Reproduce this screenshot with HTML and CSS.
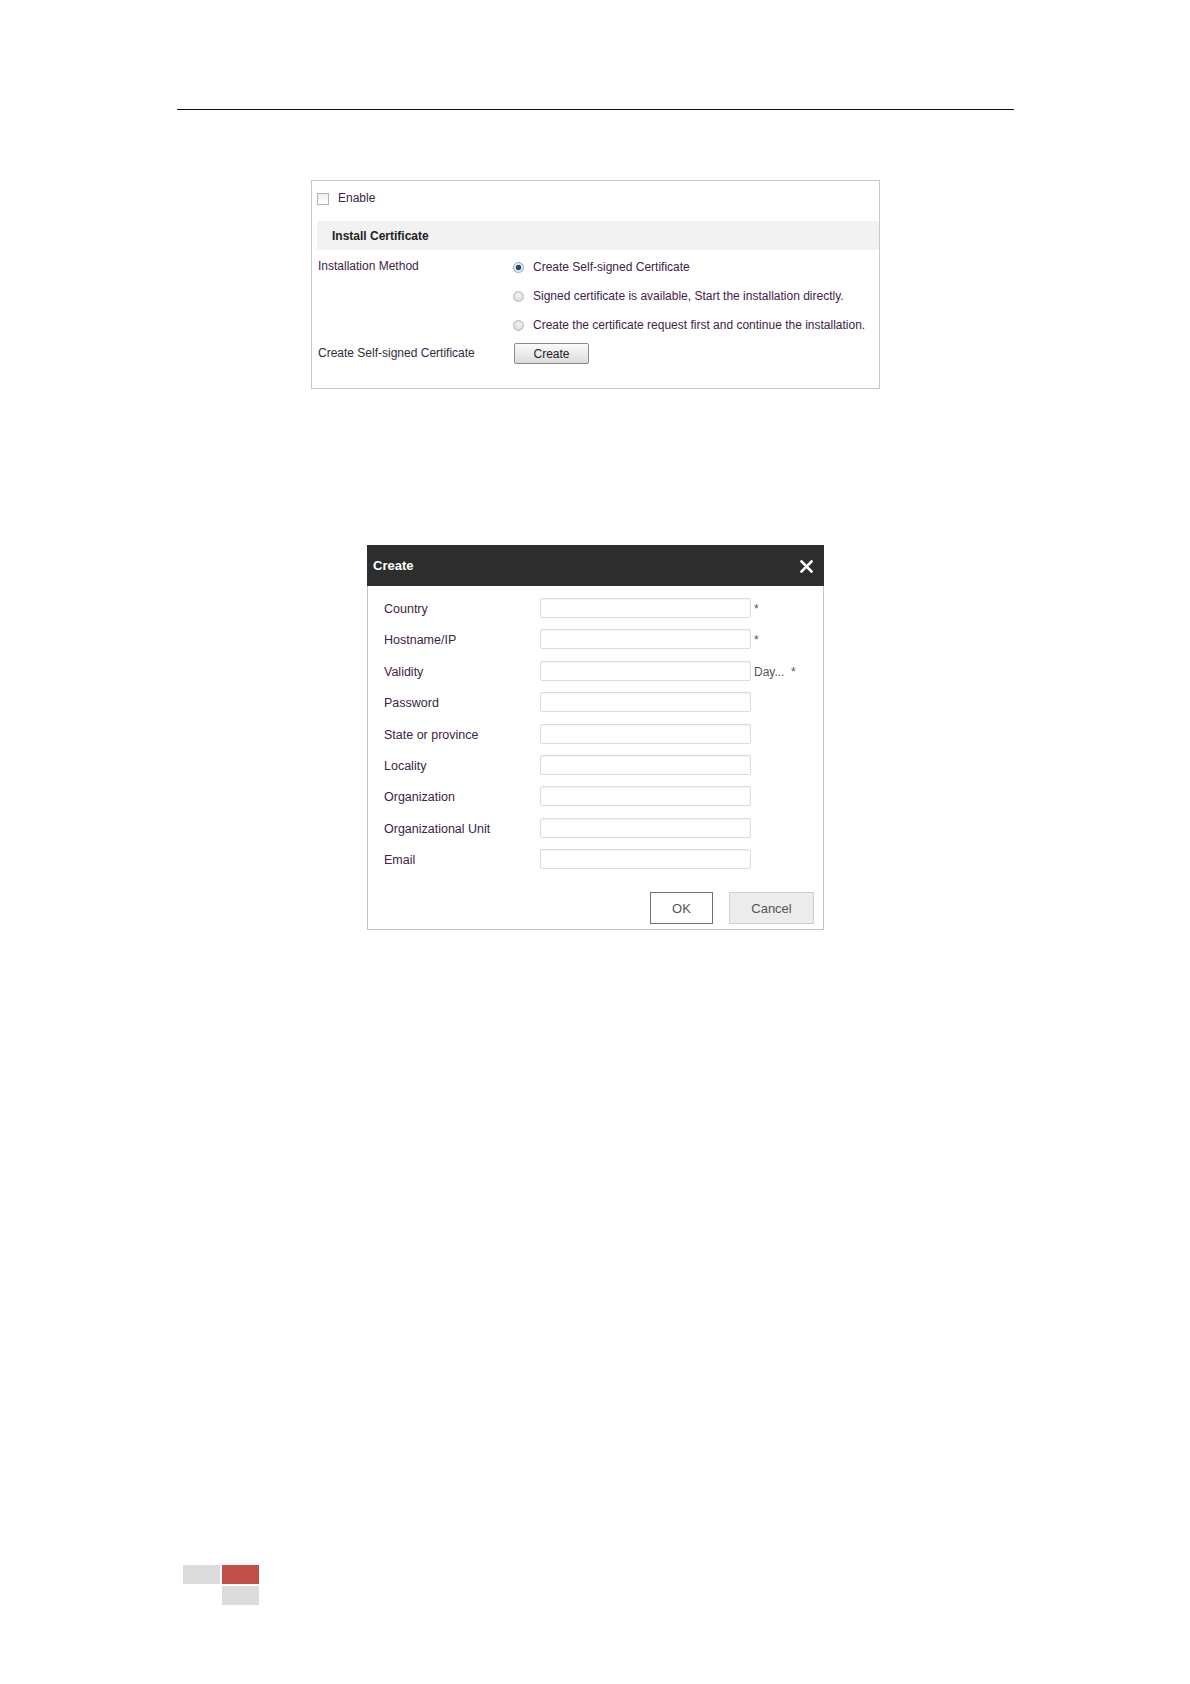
FILE: index.html
```html
<!DOCTYPE html>
<html lang="en">
<head>
    <meta charset="UTF-8">
    <meta name="viewport" content="width=device-width, initial-scale=1.0">
    <title>HTTPS Certificate</title>
    <link rel="stylesheet" href="styles.css">
</head>
<body>
    <div class="page">
        <div class="rule"></div>

        <div class="panel">
            <div class="enable-row">
                <span class="checkbox"></span>
                <span>Enable</span>
            </div>
            <div class="band">Install Certificate</div>
            <div class="form-grid">
                <div class="label">Installation Method</div>
                <div class="option"><span class="radio checked"></span>Create Self-signed Certificate</div>
                <div></div>
                <div class="option"><span class="radio"></span>Signed certificate is available, Start the installation directly.</div>
                <div></div>
                <div class="option"><span class="radio"></span>Create the certificate request first and continue the installation.</div>
                <div class="label wide">Create Self-signed Certificate</div>
                <div class="option"><button class="btn-create">Create</button></div>
            </div>
        </div>

        <div class="dialog">
            <div class="dialog-head">
                <span>Create</span>
                <svg class="close" width="13" height="13" viewBox="0 0 13 13">
                    <path d="M1.5 1.5 L11.5 11.5 M11.5 1.5 L1.5 11.5" stroke="#fff" stroke-width="2.6" stroke-linecap="square"/>
                </svg>
            </div>
            <div class="dialog-body">
                <div class="field"><label>Country</label><span class="input"></span><span class="note">*</span></div>
                <div class="field"><label>Hostname/IP</label><span class="input"></span><span class="note">*</span></div>
                <div class="field"><label>Validity</label><span class="input"></span><span class="note">Day... &nbsp;*</span></div>
                <div class="field"><label>Password</label><span class="input"></span></div>
                <div class="field"><label>State or province</label><span class="input"></span></div>
                <div class="field"><label>Locality</label><span class="input"></span></div>
                <div class="field"><label>Organization</label><span class="input"></span></div>
                <div class="field"><label>Organizational Unit</label><span class="input"></span></div>
                <div class="field"><label>Email</label><span class="input"></span></div>
                <div class="dialog-buttons">
                    <button class="btn-ok">OK</button>
                    <button class="btn-cancel">Cancel</button>
                </div>
            </div>
        </div>

        <div class="page-mark">
            <span class="mark grey"></span>
            <span class="mark red"></span>
            <span></span>
            <span class="mark grey"></span>
        </div>
    </div>
</body>
</html>
```

FILE: styles.css
```css
body {
    margin: 0;
    background: #fff;
    font-family: "Liberation Sans", Arial, sans-serif;
    font-size: 12px;
    color: #3e2346;
}
.page {
    padding-top: 109px;
}
.rule {
    margin-left: 177px;
    width: 837px;
    border-top: 1px solid #111;
}

/* certificate panel */
.panel {
    margin: 70px 0 0 311px;
    width: 562px;
    height: 207px;
    border: 1px solid #c8c8c8;
    padding-left: 5px;
}
.enable-row {
    height: 34px;
    display: flex;
    align-items: center;
    gap: 9px;
    box-sizing: border-box;
}
.checkbox {
    width: 10px;
    height: 10px;
    border: 1px solid #b4b4b4;
    background: linear-gradient(#f0f0f0, #fff);
    margin-top: 2px;
}
.band {
    margin-top: 6px;
    height: 29px;
    line-height: 31px;
    background: #f2f2f2;
    padding-left: 15px;
    font-weight: bold;
    color: #222;
}
.form-grid {
    margin-top: 2px;
    display: grid;
    grid-template-columns: 196px 1fr;
    grid-auto-rows: 29px;
}
.label {
    padding-left: 1px;
    line-height: 29px;
}
.label.wide {
    color: #2e2e3a;
    line-height: 28px;
}
.option {
    display: flex;
    align-items: center;
    gap: 9px;
    white-space: nowrap;
}
.radio {
    width: 11px;
    height: 11px;
    border-radius: 50%;
    box-sizing: border-box;
    border: 1px solid #b8b8b8;
    background: radial-gradient(circle at 50% 40%, #f4f4f4, #d2d2d2);
    margin-top: 2px;
}
.radio.checked {
    background: radial-gradient(circle, #1c4a72 0 2.5px, #d8e4ee 3px, #e8e8e8 5px);
    border-color: #9aa8b4;
}
.btn-create {
    width: 75px;
    height: 21px;
    margin: 0 0 0 1px;
    padding: 0;
    border: 1px solid #8a8a8a;
    border-radius: 2px;
    background: linear-gradient(#fafafa, #dcdcdc);
    font-family: inherit;
    font-size: 12px;
    color: #222;
}

/* create dialog */
.dialog {
    margin: 156px 0 0 367px;
    width: 457px;
}
.dialog-head {
    height: 41px;
    background: #2d2d2d;
    color: #fff;
    font-weight: bold;
    font-size: 13px;
    display: flex;
    align-items: center;
    justify-content: space-between;
    padding: 0 11px 0 6px;
}
.close {
    display: block;
    margin-top: 1px;
}
.dialog-body {
    border: 1px solid #c4c4c4;
    border-top: none;
    padding: 12px 9px 5px 16px;
    font-size: 12.5px;
}
.field {
    display: flex;
    align-items: center;
    height: 20px;
    margin-bottom: 11.375px;
}
.field label {
    width: 156px;
    padding-top: 2px;
}
.input {
    width: 209px;
    height: 18px;
    border: 1px solid #dcdcdc;
    border-radius: 2px;
    box-shadow: inset 0 1px 1px rgba(0, 0, 0, 0.05);
}
.note {
    margin-left: 3px;
    color: #555;
    font-size: 12px;
    padding-top: 2px;
}
.dialog-buttons {
    display: flex;
    justify-content: flex-end;
    gap: 16px;
    margin-top: 23px;
}
.dialog-buttons button {
    height: 32px;
    font-family: inherit;
    font-size: 13px;
    color: #555;
    padding: 0;
    margin: 0;
}
.btn-ok {
    width: 63px;
    background: #fff;
    border: 1px solid #707070;
}
.btn-cancel {
    width: 85px;
    background: #ececec;
    border: 1px solid #d0d0d0;
}

/* page corner mark */
.page-mark {
    margin: 635px 0 0 183px;
    display: grid;
    grid-template-columns: 37px 37px;
    grid-template-rows: 19px 19px;
    gap: 2px;
    width: 76px;
}
.mark.grey {
    background: #dcdcdc;
}
.mark.red {
    background: #c24f4a;
}
```
